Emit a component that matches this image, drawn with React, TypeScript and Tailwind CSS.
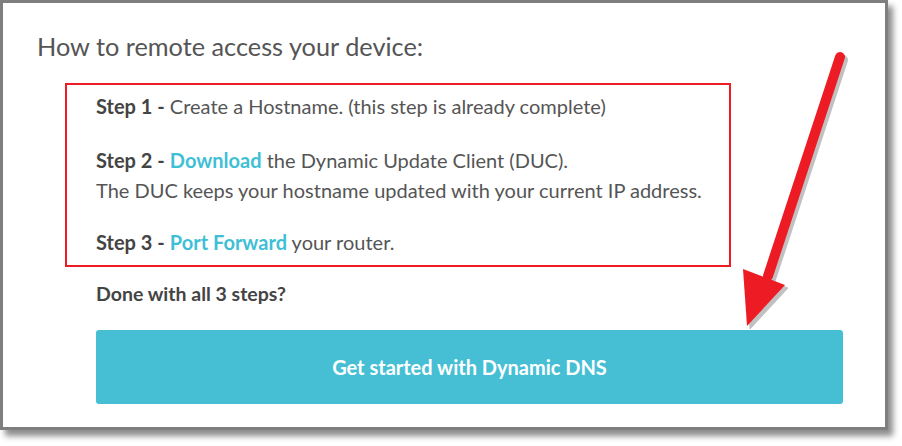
export default function App() {
  return (
    <div className="relative w-[902px] h-[446px] bg-white" style={{ fontFamily: "Lato, 'Open Sans', sans-serif" }}>
      <div className="w-[888px] h-[430px] border-[3px] border-[#7f7f7f] bg-white shadow-[5px_6px_6px_rgba(0,0,0,0.45)]">
        <h1 className="pl-[34px] pt-[28px] text-[25.3px] leading-[30px] text-[#555] font-normal">
          How to remote access your device:
        </h1>
        <div className="ml-[62px] mt-[22px] w-[666px] h-[184px] border-2 border-[#ed1c24] pl-[29px] pt-[6px] text-[20px] text-[#555]">
          <p className="leading-[30px]">
            <b className="font-bold text-[#444]">Step 1 -</b> Create a Hostname. (this step is already complete)
          </p>
          <p className="mt-[24px] leading-[30px]">
            <b className="font-bold text-[#444]">Step 2 -</b>{" "}
            <a className="font-bold text-[#3fbfd6]">Download</a> the Dynamic Update Client (DUC).
          </p>
          <p className="leading-[30px]">The DUC keeps your hostname updated with your current IP address.</p>
          <p className="mt-[22px] leading-[30px]">
            <b className="font-bold text-[#444]">Step 3 -</b>{" "}
            <a className="font-bold text-[#3fbfd6]">Port Forward</a> your router.
          </p>
        </div>
        <p className="ml-[93px] mt-[12px] text-[19.5px] leading-[30px] font-bold text-[#444]">Done with all 3 steps?</p>
        <button className="ml-[93px] mt-[21px] w-[747px] h-[74px] rounded-[3px] bg-[#46bfd5] text-white text-[20px] font-bold">
          Get started with Dynamic DNS
        </button>
      </div>
      <svg className="absolute left-0 top-0 pointer-events-none" width="902" height="446">
        <g transform="translate(3,3)" fill="#999" stroke="#999" opacity="0.6">
          <line x1="840" y1="57" x2="768" y2="276" strokeWidth="10" strokeLinecap="round" />
          <polygon points="743,269 785,285 747,326" />
        </g>
        <line x1="840" y1="57" x2="768" y2="276" stroke="#ed1c24" strokeWidth="10" strokeLinecap="round" />
        <polygon points="743,269 785,285 747,326" fill="#ed1c24" />
      </svg>
    </div>
  );
}
